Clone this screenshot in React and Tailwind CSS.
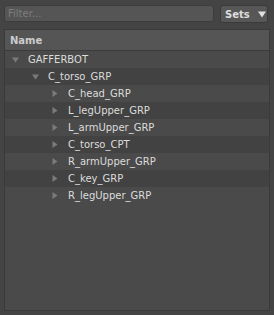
const tree = [
  { name: 'GAFFERBOT', depth: 0, open: true },
  { name: 'C_torso_GRP', depth: 1, open: true },
  { name: 'C_head_GRP', depth: 2 },
  { name: 'L_legUpper_GRP', depth: 2 },
  { name: 'L_armUpper_GRP', depth: 2 },
  { name: 'C_torso_CPT', depth: 2 },
  { name: 'R_armUpper_GRP', depth: 2 },
  { name: 'C_key_GRP', depth: 2 },
  { name: 'R_legUpper_GRP', depth: 2 },
];

function Arrow({ open }) {
  return open ? (
    <svg width="7" height="6" viewBox="0 0 7 6" className="shrink-0">
      <path d="M0 0.5h7L3.5 5.5z" fill="#7a7a7a" />
    </svg>
  ) : (
    <svg width="6" height="7" viewBox="0 0 6 7" className="shrink-0">
      <path d="M0.5 0v7L5.5 3.5z" fill="#7a7a7a" />
    </svg>
  );
}

export default function App() {
  return (
    <div className="w-[274px] h-[315px] bg-[#444444] px-1 pt-[5px] font-['DejaVu_Sans',sans-serif] text-[10px]">
      <div className="flex items-start gap-[6px]">
        <div className="w-[210px] h-[17px] rounded-[3px] bg-[#555555] border border-[#3c3c3c] flex items-center pl-[3px] text-[#7d7d7d]">
          Filter...
        </div>
        <div className="w-[48px] h-[18px] rounded-[3px] bg-[#575757] border border-[#3a3a3a] flex items-center pl-[4px] gap-[8px] font-bold text-[#dddddd]">
          Sets
          <svg width="8" height="7" viewBox="0 0 8 7">
            <path d="M0 0.5h8L4 6.5z" fill="#e0e0e0" />
          </svg>
        </div>
      </div>
      <div className="mt-[6px] h-[282px] bg-[#4a4a4a] border border-[#3a3a3a] flex flex-col">
        <div className="h-[21px] bg-[#555555] border-b border-[#3a3a3a] flex items-center pl-[5px] font-bold text-[#cccccc]">
          Name
        </div>
        {tree.map((item, i) => (
          <div
            key={item.name}
            className={`h-[17px] flex items-center text-[#dcdcdc] ${i % 2 ? 'bg-[#424242]' : 'bg-[#4a4a4a]'}`}
          >
            <div className="flex items-center" style={{ paddingLeft: 7 + item.depth * 20 }}>
              <div className="w-[16px] flex items-center">
                <Arrow open={item.open} />
              </div>
              {item.name}
            </div>
          </div>
        ))}
      </div>
    </div>
  );
}
